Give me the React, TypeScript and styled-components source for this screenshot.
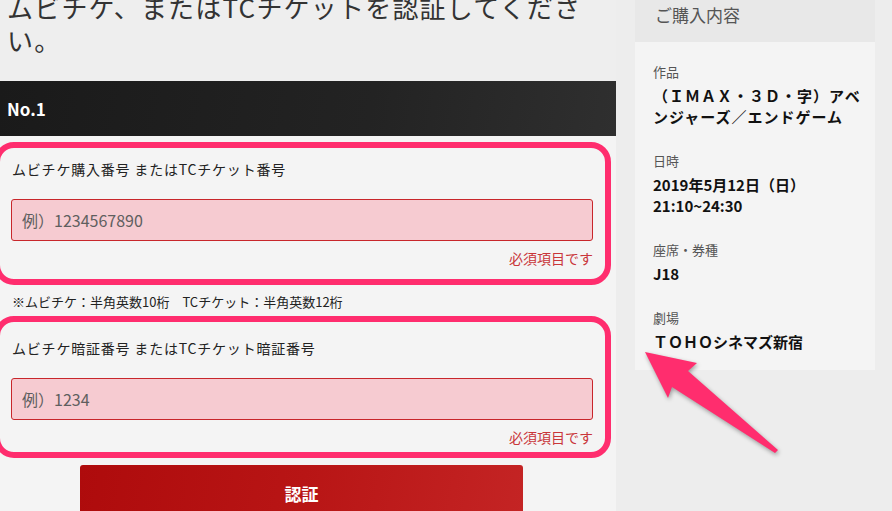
import React from 'react';
import styled, { createGlobalStyle } from 'styled-components';

const GlobalStyle = createGlobalStyle`
  html, body {
    margin: 0;
    padding: 0;
    overflow: hidden;
    background: #ededed;
  }
  body {
    font-family: "Noto Sans CJK JP", "Noto Sans", sans-serif;
    color: #222;
  }
  * {
    box-sizing: border-box;
  }
`;

const Page = styled.div`
  position: relative;
  display: flex;
  margin-top: -14px;
  min-height: 540px;
`;

const MainColumn = styled.main`
  width: 616px;
  flex-shrink: 0;
  background: #eeeeee;
  display: flex;
  flex-direction: column;
`;

const Title = styled.h1`
  margin: 4px 0 25px;
  padding: 0 7px;
  width: 600px;
  font-size: 26px;
  line-height: 33px;
  letter-spacing: 1.2px;
  font-weight: 400;
  color: #333;
`;

const TicketBar = styled.div`
  height: 55px;
  display: flex;
  align-items: center;
  padding: 0 7px;
  background: linear-gradient(100deg, #1a1a1a 0%, #232323 60%, #2f2f2f 100%);
  color: #fff;
  font-size: 17px;
  font-weight: 700;
`;

const FormArea = styled.div`
  flex: 1;
  background: #f4f4f4;
  padding-top: 6px;
`;

/* pink highlight drawn round each field */
const FieldGroup = styled.div<{ $top: number; $bottom: number }>`
  margin-left: -6px;
  width: 617px;
  border: 6px solid #ff2d6e;
  border-radius: 20px;
  padding: ${(p) => p.$top}px 12px ${(p) => p.$bottom}px 11px;
  display: flex;
  flex-direction: column;
`;

const FieldLabel = styled.label`
  padding-left: 1px;
  font-size: 14px;
  line-height: 20px;
  letter-spacing: 0.8px;
  color: #222;
  margin-bottom: 20px;
`;

const TextInput = styled.input`
  height: 42px;
  width: 100%;
  border: 1px solid #c8262b;
  border-radius: 3px;
  background: #f6cbd1;
  padding: 0 10px;
  font-family: "Noto Sans CJK JP", "Noto Sans", sans-serif;
  font-size: 16px;
  color: #333;
  outline: none;

  &::placeholder {
    color: #5f5f5f;
  }
`;

const Required = styled.div`
  margin-top: 7px;
  text-align: right;
  font-size: 14px;
  line-height: 20px;
  color: #c9363a;
`;

const Note = styled.p`
  margin: 7px 0 4px;
  padding-left: 12px;
  font-size: 13px;
  line-height: 20px;
  color: #222;
`;

const SubmitButton = styled.button`
  margin: 7px 0 0 80px;
  width: 443px;
  height: 56px;
  border: none;
  border-radius: 3px;
  background: linear-gradient(100deg, #ae0b0c 0%, #b81515 50%, #c42424 100%);
  color: #fff;
  font-family: "Noto Sans CJK JP", sans-serif;
  font-size: 17px;
  font-weight: 700;
`;

const SideColumn = styled.aside`
  flex: 1;
  background: #ededed;
  padding-left: 19px;
`;

const Summary = styled.section`
  width: 240px;
`;

const SummaryHeader = styled.h2`
  margin: 0;
  height: 56px;
  display: flex;
  align-items: center;
  padding-left: 20px;
  background: #e8e8e8;
  font-size: 17px;
  font-weight: 400;
  color: #555;
`;

const SummaryBody = styled.dl`
  margin: 0;
  padding: 20px 10px 18px 18px;
  background: #f4f4f4;
`;

const ItemLabel = styled.dt`
  font-size: 13px;
  line-height: 20px;
  color: #555;
  margin-bottom: 3px;
`;

const ItemValue = styled.dd<{ $spaced?: boolean }>`
  margin: 0 0 24px;
  font-size: 15px;
  line-height: 21px;
  font-weight: 700;
  color: #111;
  letter-spacing: ${(p) => (p.$spaced ? '1px' : '0')};

  &:last-child {
    margin-bottom: 0;
  }
`;

const Arrow = styled.svg`
  position: absolute;
  left: 630px;
  top: 354px;
  width: 160px;
  height: 125px;
  overflow: visible;
  filter: drop-shadow(1px 2px 2px rgba(0, 0, 0, 0.35));
  pointer-events: none;
`;

const fields = [
  {
    label: 'ムビチケ購入番号 またはTCチケット番号',
    placeholder: '例）1234567890',
    top: 11,
    bottom: 11,
  },
  {
    label: 'ムビチケ暗証番号 またはTCチケット暗証番号',
    placeholder: '例）1234',
    top: 16,
    bottom: 5,
  },
];

const App: React.FC = () => {
  return (
    <>
      <GlobalStyle />
      <Page>
        <MainColumn>
          <Title>ムビチケ、またはTCチケットを認証してください。</Title>
          <TicketBar>No.1</TicketBar>
          <FormArea>
            <FieldGroup $top={fields[0].top} $bottom={fields[0].bottom}>
              <FieldLabel>{fields[0].label}</FieldLabel>
              <TextInput placeholder={fields[0].placeholder} />
              <Required>必須項目です</Required>
            </FieldGroup>
            <Note>※ムビチケ：半角英数10桁　TCチケット：半角英数12桁</Note>
            <FieldGroup $top={fields[1].top} $bottom={fields[1].bottom}>
              <FieldLabel>{fields[1].label}</FieldLabel>
              <TextInput placeholder={fields[1].placeholder} />
              <Required>必須項目です</Required>
            </FieldGroup>
            <SubmitButton type="button">認証</SubmitButton>
          </FormArea>
        </MainColumn>

        <SideColumn>
          <Summary>
            <SummaryHeader>ご購入内容</SummaryHeader>
            <SummaryBody>
              <ItemLabel>作品</ItemLabel>
              <ItemValue $spaced>（ＩＭＡＸ・３Ｄ・字）アベンジャーズ／エンドゲーム</ItemValue>
              <ItemLabel>日時</ItemLabel>
              <ItemValue>
                2019年5月12日（日）
                <br />
                21:10~24:30
              </ItemValue>
              <ItemLabel>座席・券種</ItemLabel>
              <ItemValue>J18</ItemValue>
              <ItemLabel>劇場</ItemLabel>
              <ItemValue>ＴＯＨＯシネマズ新宿</ItemValue>
            </SummaryBody>
          </Summary>
        </SideColumn>

        <Arrow viewBox="0 0 160 125">
          <polygon
            points="15,12 67,23 58,31 148,110 145,113 42,47 38,58"
            fill="#ff2d6e"
          />
        </Arrow>
      </Page>
    </>
  );
};

export default App;
